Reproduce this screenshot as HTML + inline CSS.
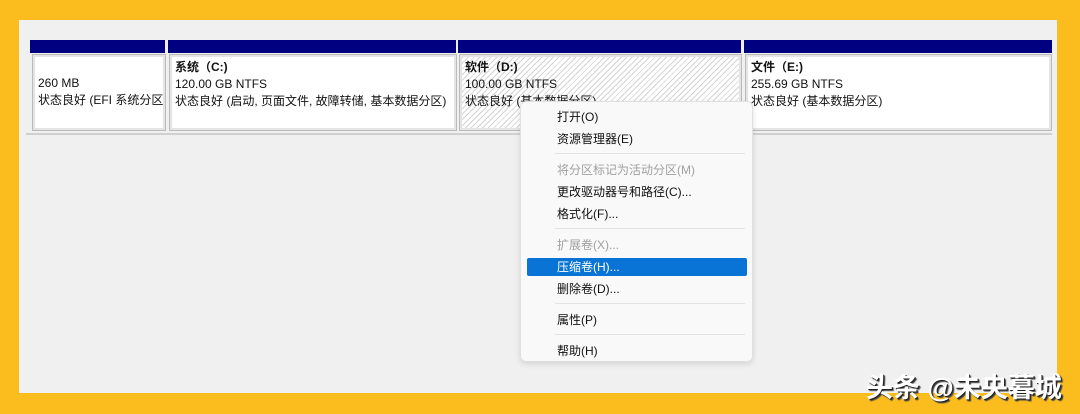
<!DOCTYPE html>
<html><head><meta charset="utf-8"><style>
body{margin:0;width:1080px;height:414px;background:#FBBC1E;position:relative;overflow:hidden;font-family:"Liberation Sans","Noto Sans CJK SC",sans-serif;font-size:12px;color:#111}
.panel{position:absolute;left:19px;top:20px;width:1038px;height:373px;background:#f0f0f0}
.hdr{position:absolute;top:40px;height:13px;background:#000080}
.box{position:absolute;top:54px;height:77px;background:#fff;border:1px solid #bbb;box-shadow:inset 0 0 0 2px #e4e4e4;box-sizing:border-box}
.t{position:absolute;left:5px;line-height:17px}
.hatch{background:repeating-linear-gradient(135deg,#fff 0 3px,#d4d4d4 3px 4px)}
.line{position:absolute;left:26px;top:133px;width:1026px;height:2px;background:#d0d0d0}
.menu{position:absolute;left:520px;top:101px;width:233px;height:261px;background:#f9f9f9;border:1px solid #e0e0e0;border-radius:6px;box-sizing:border-box;box-shadow:0 2px 6px rgba(0,0,0,.12)}
.mi{position:absolute;left:36px;font-size:12px;line-height:16px}
.g{color:#a0a0a0}
.sep{position:absolute;left:34px;width:190px;height:1px;background:#e2e2e2}
.hl{position:absolute;left:6px;top:156px;width:220px;height:18px;background:#0a74d6;border-radius:2px}
.wm{position:absolute;left:866px;top:366px;font-size:27px;font-weight:bold;color:#fff;text-shadow:1px 1px 0 #222,2px 2px 1px #444;white-space:nowrap}
</style></head><body>
<div class="panel"></div>
<div class="hdr" style="left:30px;width:135px"></div>
<div class="hdr" style="left:168px;width:288px"></div>
<div class="hdr" style="left:458px;width:283px"></div>
<div class="hdr" style="left:744px;width:308px"></div>
<div class="box" style="left:32px;width:134px"><div class="t" style="top:20px">260 MB<br>状态良好 (EFI 系统分区</div></div>
<div class="box" style="left:169px;width:288px"><div class="t" style="top:4px"><b>系统（C:)</b><br>120.00 GB NTFS<br>状态良好 (启动, 页面文件, 故障转储, 基本数据分区)</div></div>
<div class="box hatch" style="left:459px;width:283px"><div class="t" style="top:4px"><b>软件（D:)</b><br>100.00 GB NTFS<br>状态良好 (基本数据分区)</div></div>
<div class="box" style="left:745px;width:307px"><div class="t" style="top:4px"><b>文件（E:)</b><br>255.69 GB NTFS<br>状态良好 (基本数据分区)</div></div>
<div class="line"></div>
<div class="menu">
<div class="hl"></div>
<div class="mi" style="top:7px">打开(O)</div>
<div class="mi" style="top:29px">资源管理器(E)</div>
<div class="sep" style="top:51px"></div>
<div class="mi g" style="top:60px">将分区标记为活动分区(M)</div>
<div class="mi" style="top:82px">更改驱动器号和路径(C)...</div>
<div class="mi" style="top:104px">格式化(F)...</div>
<div class="sep" style="top:126px"></div>
<div class="mi g" style="top:135px">扩展卷(X)...</div>
<div class="mi" style="top:157px;color:#fff">压缩卷(H)...</div>
<div class="mi" style="top:179px">删除卷(D)...</div>
<div class="sep" style="top:201px"></div>
<div class="mi" style="top:210px">属性(P)</div>
<div class="sep" style="top:232px"></div>
<div class="mi" style="top:241px">帮助(H)</div>
</div>
<div class="wm">头条 @未央暮城</div>
</body></html>
